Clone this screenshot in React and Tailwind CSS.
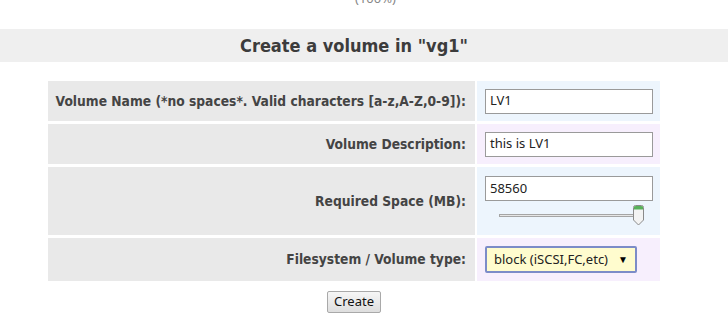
import React from 'react';

const rows = [
    { label: 'Volume Name (*no spaces*. Valid characters [a-z,A-Z,0-9]):', tone: 'blue', h: 'h-[40px]', kind: 'text', value: 'LV1' },
    { label: 'Volume Description:', tone: 'pink', h: 'h-[40px]', kind: 'text', value: 'this is LV1' },
    { label: 'Required Space (MB):', tone: 'blue', h: 'h-[68px]', kind: 'size', value: '58560' },
    { label: 'Filesystem / Volume type:', tone: 'pink', h: 'h-[43px]', kind: 'select', value: 'block (iSCSI,FC,etc)' },
];

const labelFont = { fontFamily: '"DejaVu Sans Condensed", "DejaVu Sans", sans-serif' };
const fieldFont = { fontFamily: '"Noto Sans", "Liberation Sans", sans-serif' };

const Slider = () => (
    <div className="relative h-[21px] ml-[14px] w-[148px] mt-[4px]">
        <div className="absolute left-0 top-[9px] h-[3px] w-[138px] border border-[#a5a5a5] bg-[#e6e6e6]" />
        <svg className="absolute left-[134px] top-0" width="11" height="21" viewBox="0 0 11 21">
            <path d="M0.5 2.5 Q0.5 0.5 2.5 0.5 H8.5 Q10.5 0.5 10.5 2.5 V15 L5.5 20 L0.5 15 Z" fill="#f3f3f3" stroke="#8a8a8a" />
            <path d="M1 1.8 Q1.5 1 3 1 H8 Q9.5 1 10 1.8 V4.5 H1 Z" fill="#58b15a" />
        </svg>
    </div>
);

const Field = ({ row }) => {
    if (row.kind === 'select') {
        return (
            <div className="w-[152px] h-[27px] border-2 border-[#7c8cc8] bg-[#fffcce] rounded-[2px] flex items-center justify-between pl-[7px] pr-[7px] text-[13px] text-[#222]" style={fieldFont}>
                <span>{row.value}</span>
                <span className="text-[10px] text-black">▼</span>
            </div>
        );
    }
    return (
        <div>
            <div className="w-[168px] h-[25px] border border-[#9a9a9a] bg-white flex items-center px-[4px] text-[13px] text-[#222]" style={fieldFont}>
                {row.value}
            </div>
            {row.kind === 'size' && <Slider />}
        </div>
    );
};

export default function App() {
    return (
        <div className="w-[728px] h-[318px] bg-white overflow-hidden">
            <div className="w-[708px] h-[29px] overflow-hidden">
                <div className="ml-[355px] -mt-[11px] text-[13px] text-[#888]" style={fieldFont}>(100%)</div>
            </div>
            <div className="w-[728px] h-[33px] bg-[#efefef] flex items-center">
                <h1 className="w-[708px] text-center text-[18px] font-bold text-[#3c3c3c]" style={labelFont}>
                    Create a volume in "vg1"
                </h1>
            </div>
            <div className="w-[708px] flex flex-col items-center mt-[16px]">
                <table className="border-separate border-spacing-x-[2px] border-spacing-y-[3px]">
                    <tbody>
                        {rows.map((row) => (
                            <tr key={row.label} className={row.h}>
                                <td className="w-[427px] bg-[#e9e9e9] text-right pr-[9px] text-[13.7px] font-bold text-[#444]" style={labelFont}>
                                    {row.label}
                                </td>
                                <td className={`w-[183px] pl-[8px] align-middle ${row.tone === 'blue' ? 'bg-[#edf5fd]' : 'bg-[#f7effd]'}`}>
                                    <Field row={row} />
                                </td>
                            </tr>
                        ))}
                    </tbody>
                </table>
                <button className="mt-[7px] h-[22px] px-[6px] border border-[#a9a9a9] rounded-[2px] bg-gradient-to-b from-[#f6f6f6] to-[#dedede] text-[13px] text-[#111]" style={fieldFont}>
                    Create
                </button>
            </div>
        </div>
    );
}
